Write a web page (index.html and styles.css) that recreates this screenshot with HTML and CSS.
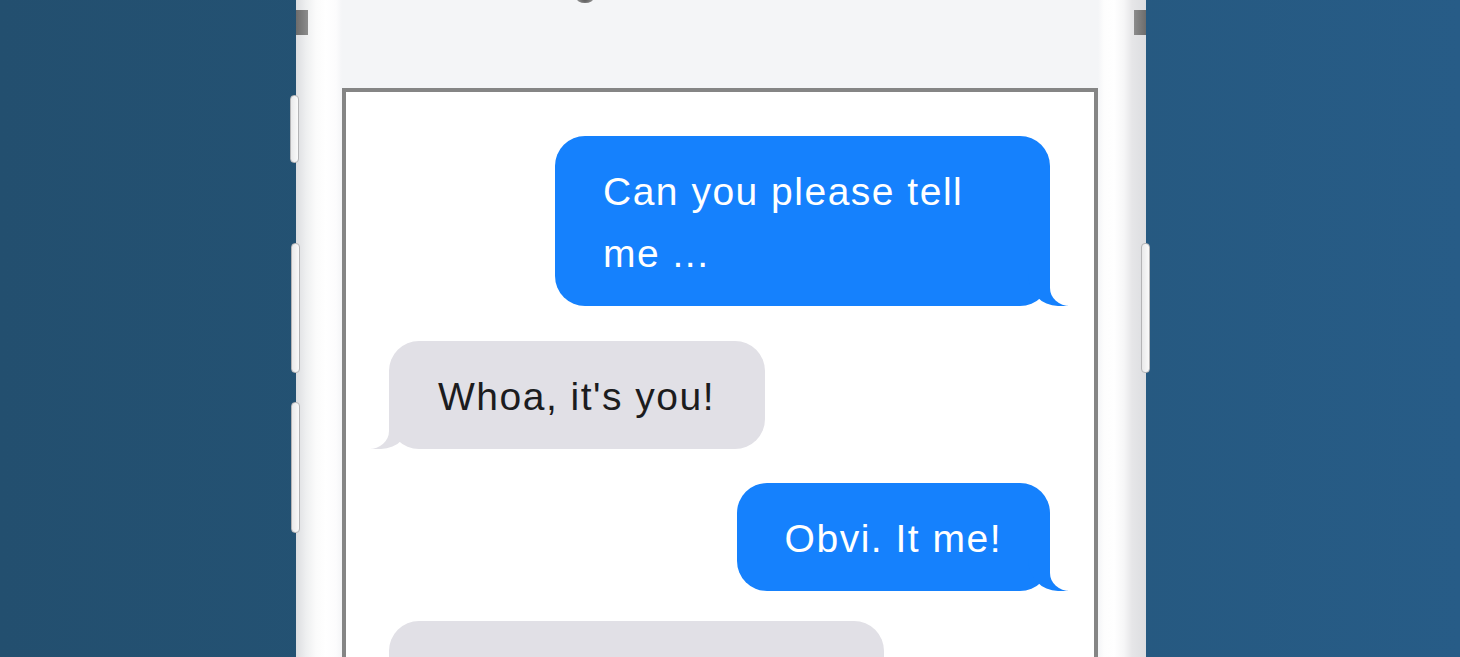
FILE: index.html
```html
<!DOCTYPE html>
<html lang="en">
<head>
<meta charset="utf-8">
<title>Messages</title>
<link rel="stylesheet" href="styles.css">
</head>
<body>
<div class="stage">
  <div class="phone">
    <span class="camera"></span>
    <span class="band band-left"></span>
    <span class="band band-right"></span>
    <span class="btn btn-l1"></span>
    <span class="btn btn-l2"></span>
    <span class="btn btn-l3"></span>
    <span class="btn btn-r1"></span>
    <div class="screen">
      <div class="status"></div>
      <div class="chat">
        <div class="bubble sent">Can you please tell me ...</div>
        <div class="bubble received">Whoa, it's you!</div>
        <div class="bubble sent">Obvi. It me!</div>
        <div class="bubble received">I know, right? It has been such a long time!</div>
      </div>
    </div>
  </div>
</div>
</body>
</html>
```

FILE: styles.css
```css
html, body {
  margin: 0;
  padding: 0;
}
body {
  height: 657px;
  overflow: hidden;
  background: linear-gradient(90deg, #234f6f 0%, #245476 40%, #275c87 100%);
  font-family: "Liberation Sans", Arial, sans-serif;
}
.stage {
  display: flex;
  padding-left: 296px;
}
.phone {
  position: relative;
  width: 850px;
  height: 657px;
  box-sizing: border-box;
  padding: 0 48px 0 46px;
  background: linear-gradient(90deg,
    #dcdde0 0px, #eeeff0 10px, #fbfbfb 20px, #ffffff 30px, #fcfcfd 40px,
    #f4f5f7 46px, #f4f5f7 802px,
    #fdfdfd 808px, #ffffff 818px, #f6f6f7 828px, #e6e6e8 836px, #dcdde0 850px);
}
.camera {
  position: absolute;
  left: 280px;
  top: -8px;
  width: 18px;
  height: 11px;
  border-radius: 50%;
  background: radial-gradient(circle at 50% 60%, #555 0%, #888 60%, rgba(160,160,160,0) 100%);
}
.band {
  position: absolute;
  top: 10px;
  width: 12px;
  height: 25px;
  background: linear-gradient(90deg, #6c6c6c, #8c8c8c);
}
.band-left { left: 0; }
.band-right { right: 0; background: linear-gradient(90deg, #8c8c8c, #6c6c6c); }
.btn {
  position: absolute;
  width: 9px;
  box-sizing: border-box;
  background: linear-gradient(90deg, #e9e9ea, #fafafa);
  border: 1px solid #b4b4b6;
  border-radius: 4px;
}
.btn-l1 { left: -6px; top: 95px; height: 68px; }
.btn-l2 { left: -5px; top: 243px; height: 130px; }
.btn-l3 { left: -5px; top: 402px; height: 131px; }
.btn-r1 { right: -4px; top: 243px; height: 130px; }
.screen {
  display: flex;
  flex-direction: column;
  height: 100%;
}
.status {
  height: 88px;
  flex: none;
}
.chat {
  flex: 1;
  display: flex;
  flex-direction: column;
  background: #ffffff;
  border: 4px solid #858585;
  border-bottom: none;
  padding: 44px 44px 0 43px;
}
.bubble {
  position: relative;
  max-width: 495px;
  box-sizing: border-box;
  padding: 25px 48px 21px 48px;
  border-radius: 30px;
  font-size: 39px;
  line-height: 62px;
  letter-spacing: 1.5px;
  margin-bottom: 35px;
}
.bubble:nth-child(3) { margin-top: -1px; }
.bubble:nth-child(4) { margin-top: -5px; }
.sent {
  align-self: flex-end;
  background: #1581fd;
  color: #ffffff;
}
.received {
  align-self: flex-start;
  background: #e1e0e6;
  color: #1c1c1e;
  padding-left: 49px;
  padding-right: 50px;
}
.sent::before,
.sent::after,
.received::before,
.received::after {
  content: "";
  position: absolute;
  bottom: 0;
  height: 36px;
}
.sent::before {
  right: -18px;
  width: 40px;
  background: #1581fd;
  border-bottom-left-radius: 30px 32px;
}
.sent::after {
  right: -26px;
  width: 26px;
  background: #ffffff;
  border-bottom-left-radius: 20px 18px;
}
.received::before {
  left: -18px;
  width: 40px;
  background: #e1e0e6;
  border-bottom-right-radius: 30px 32px;
}
.received::after {
  left: -26px;
  width: 26px;
  background: #ffffff;
  border-bottom-right-radius: 20px 18px;
}
```
